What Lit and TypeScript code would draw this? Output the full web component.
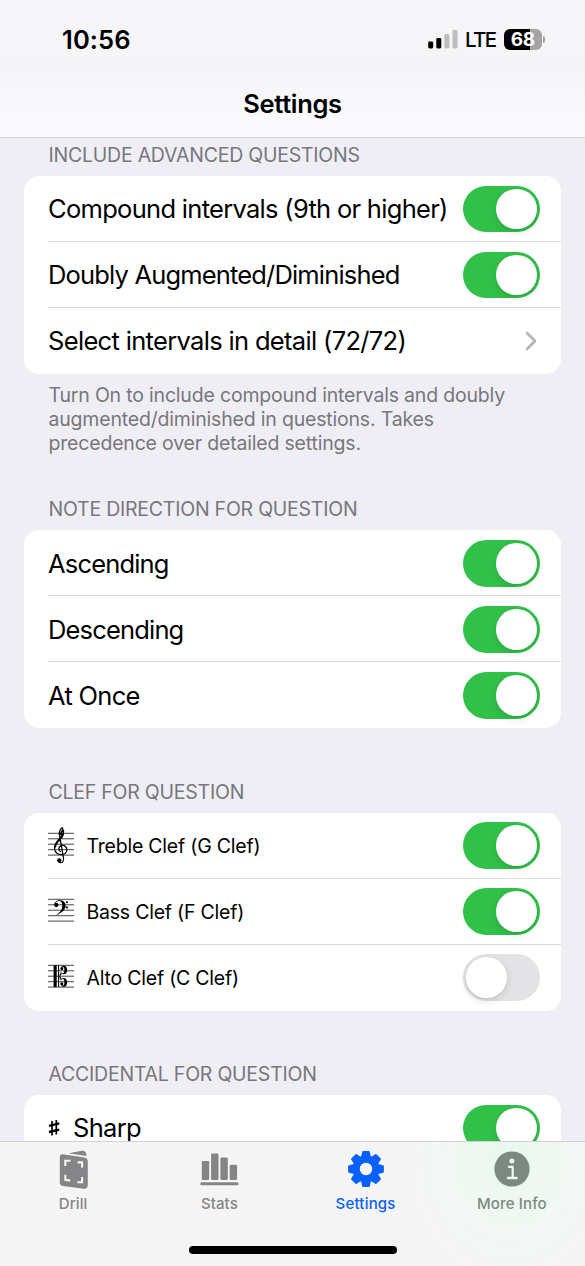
import { LitElement, html, css, svg, nothing } from "lit";
import { customElement, property } from "lit/decorators.js";
import { classMap } from "lit/directives/class-map.js";

@customElement("toggle-switch")
class ToggleSwitch extends LitElement {
  @property({ type: Boolean }) on = false;
  static styles = css`
    :host { display: block; flex: none; }
    .track { box-sizing: border-box; width: 76.5px; height: 46.5px; border-radius: 24px; background: #e3e3e5; padding: 3px; display: flex; }
    .track.on { background: #31c149; justify-content: flex-end; }
    .knob { width: 40.5px; height: 40.5px; border-radius: 50%; background: #fff; box-shadow: 0 3px 8px rgba(0,0,0,.12), 0 1px 2px rgba(0,0,0,.05); }
  `;
  render() {
    return html`<div class=${classMap({ track: true, on: this.on })}><div class="knob"></div></div>`;
  }
}

const staff = svg`<path d="M0 6.3H26M0 11.8H26M0 17.2H26M0 22.7H26M0 28.1H26" stroke="#333" stroke-width=".9" fill="none"/>`;

const glyphs: Record<string, unknown> = {
  treble: svg`${staff}
    <path d="M15.6 31.6 11.4 7.8C10.9 4.4 12 2.3 14.2 .7c1.3 2 1.7 4.3 1.1 6.7-.7 2.7-2.7 4.6-4.7 6.6-2.5 2.5-4.3 4.7-4 8 .3 3.5 3.5 5.9 7.2 5.7 3-.2 5.1-2.4 5-5-.1-2.6-1.9-4.4-4.3-4.3-2.2.1-3.7 1.7-3.6 3.6.1 1.3.8 2.3 2 2.8" fill="none" stroke="#000" stroke-width="1.25"/>
    <path d="M15 3c-1.5 1.3-2.3 3.2-2.2 5.2M15.4 6.5c-.9 2.5-2.7 4.4-4.6 6.4-2.2 2.3-3.7 4.2-3.8 7.5" fill="none" stroke="#000" stroke-width="1.9"/>
    <path d="M15.5 31.2c.4 2.9-1 4.6-3.2 4.6-1.2 0-2-.6-2.3-1.4" fill="none" stroke="#000" stroke-width="1.1"/>
    <circle cx="11.3" cy="33.3" r="2.1"/>`,
  bass: svg`${staff}
    <circle cx="8.3" cy="12" r="2.15"/>
    <path d="M6.3 11.7C6.3 9 8.500 7.2 11.7 7.2c3.7 0 5.9 2.1 5.9 5.3 0 4.7-4.4 7.6-10.6 10.2 4.6-3 7.3-5.7 7.3-10 0-3-1.2-4.6-3.3-4.6-2 0-3.3 1-3.7 2.7z"/>
    <circle cx="18.9" cy="9.3" r="1.05"/><circle cx="18.9" cy="14.4" r="1.05"/>`,
  alto: svg`${staff}
    <path d="M5.6 6.3h3.1v21.8H5.6zM10 6.3h1.1v21.8H10z"/>
    <circle cx="13.8" cy="9.6" r="1.5"/><circle cx="13.8" cy="24.8" r="1.5"/>
    <path d="M12.8 8.5c.7-1.3 1.7-1.8 3-1.8 2.2 0 3.3 1.7 3.3 4 0 2.9-1.3 4.6-3.2 4.6-1 0-1.7-.3-2.2-1-.3 1.4-1 2.3-1.9 2.900.9.6 1.6 1.5 1.9 2.9.5-.7 1.2-1 2.2-1 1.9 0 3.2 1.7 3.2 4.6 0 2.3-1.1 4-3.3 4-1.3 0-2.3-.5-3-1.8l1.9.6c1.3-.1 1.7-.9 1.7-2.9 0-2.3-.4-3.5-1.5-3.5-.9 0-1.5.5-1.9 1.6l-1.9-4.5 1.9-4.5c.4 1.1 1 1.6 1.9 1.6 1.1 0 1.5-1.2 1.5-3.5 0-2-.4-2.8-1.7-2.9z"/>`,
};

interface Row { label: string; on?: boolean; clef?: string; sharp?: boolean; link?: boolean; cls: string; }
interface Section { title: string; cls: string; rows: Row[]; note?: string[]; }

const sections: Section[] = [
  {
    title: "INCLUDE ADVANCED QUESTIONS", cls: "t1",
    rows: [
      { label: "Compound intervals (9th or higher)", on: true, cls: "" },
      { label: "Doubly Augmented/Diminished", on: true, cls: "tight" },
      { label: "Select intervals in detail (72/72)", link: true, cls: "wide" },
    ],
    note: ["Turn On to include compound intervals and doubly", "augmented/diminished in questions. Takes", "precedence over detailed settings."],
  },
  {
    title: "NOTE DIRECTION FOR QUESTION", cls: "t2",
    rows: [
      { label: "Ascending", on: true, cls: "tight" },
      { label: "Descending", on: true, cls: "tight" },
      { label: "At Once", on: true, cls: "" },
    ],
  },
  {
    title: "CLEF FOR QUESTION", cls: "t3",
    rows: [
      { label: "Treble Clef (G Clef)", on: true, clef: "treble", cls: "small" },
      { label: "Bass Clef (F Clef)", on: true, clef: "bass", cls: "small" },
      { label: "Alto Clef (C Clef)", on: false, clef: "alto", cls: "small" },
    ],
  },
  { title: "ACCIDENTAL FOR QUESTION", cls: "t4", rows: [{ label: "Sharp", on: true, sharp: true, cls: "" }] },
];

const gearPath = (() => {
  const pts: string[] = [];
  for (let i = 0; i < 8; i++) {
    const a = (i * Math.PI) / 4;
    for (const [r, d] of [[12.4, -0.31], [16.9, -0.16], [16.9, 0.16], [12.4, 0.31]]) {
      pts.push(`${(20 + r * Math.sin(a + d)).toFixed(2)} ${(20 - r * Math.cos(a + d)).toFixed(2)}`);
    }
  }
  return `M${pts.join("L")}Z`;
})();

const tabs = [
  {
    label: "Drill", cls: "drill",
    icon: svg`<path d="M15.5 4.2 28.5 1.8c2.6-.4 4.3.6 4.7 2.8l.3 2.300z"/>
      <path d="M9.8 5.3 31.3 8.600c2.300.3 3.500 1.600 3.500 3.800V36c0 2.600-1.500 4-4 3.700L9.700 36.900C7.700 36.600 6.800 35.500 6.800 33.500V8.100c0-2.100 1.100-3.100 3-2.800z"/>
      <path d="M17.500 11.700h-5.200v5.200M24.600 13.400h4.500v5.200M12.300 25.800v5l4.900.8M24.400 33.300h4.700v-5.400" fill="none" stroke="#f5f5f6" stroke-width="2.100"/>`,
  },
  {
    label: "Stats", cls: "stats",
    icon: svg`<rect x="2.8" y="12" width="7.4" height="19" rx="1.3"/><rect x="12.1" y="4.5" width="7.4" height="26.5" rx="1.3"/><rect x="21.4" y="8.5" width="7.4" height="22.5" rx="1.3"/><rect x="30.7" y="15.8" width="7.4" height="15.2" rx="1.3"/><rect x="1.2" y="33.3" width="38.4" height="3" rx="1.5"/>`,
  },
  {
    label: "Settings", cls: "active",
    icon: svg`<path d=${gearPath} stroke="currentColor" stroke-width="2.4" stroke-linejoin="round"/><circle cx="20" cy="20" r="6.2" fill="#f5f5f6"/>`,
  },
  {
    label: "More Info", cls: "info",
    icon: svg`<circle cx="20" cy="20" r="17.6"/><circle cx="19.9" cy="11.9" r="2.5" fill="#ecf7ef"/><path d="M16.9 17.8h3.8v11.2M15.9 29h8.8" stroke="#ecf7ef" stroke-width="2.3" stroke-linecap="round" stroke-linejoin="round" fill="none"/>`,
  },
];

@customElement("app-root")
class AppRoot extends LitElement {
  static styles = css`
    :host { display: flex; flex-direction: column; width: 585px; height: 1266px; overflow: hidden; background: #efeef5; color: #000; font-family: Inter, "Liberation Sans", sans-serif; white-space: nowrap; }
    svg { display: block; flex: none; overflow: visible; }
    .top { flex: none; box-sizing: border-box; height: 137.5px; border-bottom: 1.5px solid #d5d4da; background: linear-gradient(#f6f6f8, #f5f5f7 50%, #fafafd 90%); display: flex; flex-direction: column; }
    .status { display: flex; align-items: center; height: 78px; padding: 0 40px 0 62px; font-weight: 600; }
    .time { font-size: 25.5px; letter-spacing: 0.1px; flex: 1; }
    .lte { font-size: 20.5px; font-weight: 500; letter-spacing: -1.7px; margin: 0 8px 0 7px; width: 31px; }
    .battery { width: 37.5px; height: 21px; border-radius: 6px; background: linear-gradient(90deg, #000 68%, #a4a4a6 68%); color: #fff; font-size: 19px; line-height: 21px; font-weight: 700; text-align: center; letter-spacing: -.3px; }
    .nub { width: 2.5px; height: 7px; border-radius: 0 4px 4px 0; background: #a4a4a6; margin-left: 1px; }
    .heading { font-size: 25.5px; line-height: 52px; font-weight: 600; text-align: center; letter-spacing: -0.35px; }
    .scroll { flex: 1; min-height: 0; overflow: hidden; padding: 5.5px 24.5px 0 24px; }
    .section { margin-bottom: 51.5px; }
    .section.t1 { margin-bottom: 42.5px; }
    .title { margin: 0; padding: 0 24.5px 9px; font-size: 19.5px; line-height: 24px; font-weight: 400; letter-spacing: -0.23px; color: #77777c; }
    .card { background: #fff; border-radius: 15px; }
    .row { box-sizing: border-box; height: 66px; display: flex; align-items: center; padding-top: 1.5px; margin-left: 24px; padding-right: 21px; border-bottom: 1px solid #d9d9dc; }
    .t1 .row { padding-top: 0.5px; }
    .row:last-child { border-bottom-color: transparent; }
    .label { flex: 1; font-size: 25.5px; letter-spacing: -0.7px; }
    .tight .label { letter-spacing: -0.83px; }
    .wide .label { letter-spacing: -0.67px; }
    .small .label { font-size: 19.5px; letter-spacing: -0.22px; margin-left: 12.5px; }
    .sharp .label { margin-left: 13px; }
    .t4 .card { height: 90px; }
    .t3 .row { padding-top: 1px; }
    .t4 .row { padding-top: 0.5px; border-bottom-color: transparent; }
    .chev { margin-right: 3px; }
    .note { padding: 8.5px 24.5px 0; font-size: 19.5px; line-height: 24px; color: #77777c; letter-spacing: -0.19px; }
    .tabbar { flex: none; box-sizing: border-box; height: 125.5px; border-top: 1.5px solid #d3d3d7; background: radial-gradient(ellipse 100px 120px at 510px 20px, #e9f8ec, rgba(240,249,242,.7) 55%, transparent), #f5f5f6; display: flex; flex-direction: column; align-items: center; }
    .tabs { display: grid; grid-template-columns: repeat(4, 146.25px); height: 104.5px; }
    .tab { display: flex; flex-direction: column; align-items: center; padding-top: 7.5px; gap: 5px; color: #858587; fill: currentColor; font-size: 15px; line-height: 20px; font-weight: 500; letter-spacing: 0.1px; }
    .tab.active { color: #0a60ff; letter-spacing: 0.2px; }
    .tab.info { color: #7c8980; letter-spacing: 0.15px; }
    .home { width: 208px; height: 8px; border-radius: 4px; background: #000; }
  `;

  renderRow(r: Row) {
    return html`<div class="row ${r.cls} ${r.sharp ? "sharp" : ""}">
      ${r.clef ? html`<svg width="26" height="37" viewBox="0 0 26 37">${glyphs[r.clef]}</svg>` : nothing}
      ${r.sharp ? html`<svg width="12" height="18" viewBox="0 0 12 18"><path d="M4 2v14.4M8.3 1.1v14.4" stroke="#000" stroke-width="1.7"/><path d="M1 6.8 11.300 4.4M1 13 11.300 10.600" stroke="#000" stroke-width="2.400"/></svg>` : nothing}
      <span class="label">${r.label}</span>
      ${r.link
        ? html`<svg class="chev" width="12" height="20" viewBox="0 0 12 20"><path d="M2 2l8 8-8 8" fill="none" stroke="#b4b4b7" stroke-width="2.7" stroke-linecap="round" stroke-linejoin="round"/></svg>`
        : html`<toggle-switch ?on=${r.on}></toggle-switch>`}
    </div>`;
  }

  render() {
    return html`
      <header class="top">
        <div class="status">
          <span class="time">10:56</span>
          <svg width="30" height="20" viewBox="0 0 30 20"><rect x=".2" y="12.5" width="5" height="7" rx="1.4"/><rect x="8.3" y="9" width="5" height="10.5" rx="1.4"/><rect x="16.4" y="5" width="5" height="14.5" rx="1.4" fill="#bdbdbf"/><rect x="24.5" y="1" width="5" height="18.5" rx="1.4" fill="#bdbdbf"/></svg>
          <span class="lte">LTE</span>
          <div class="battery">68</div><div class="nub"></div>
        </div>
        <div class="heading">Settings</div>
      </header>
      <main class="scroll">
        ${sections.map((s) => html`<section class="section ${s.cls}">
          <h2 class="title">${s.title}</h2>
          <div class="card">${s.rows.map((r) => this.renderRow(r))}</div>
          ${s.note ? html`<div class="note">${s.note.map((l) => html`<div>${l}</div>`)}</div>` : nothing}
        </section>`)}
      </main>
      <nav class="tabbar">
        <div class="tabs">
          ${tabs.map((t) => html`<div class="tab ${t.cls}"><svg width="40" height="40" viewBox="0 0 40 40">${t.icon}</svg><span>${t.label}</span></div>`)}
        </div>
        <div class="home"></div>
      </nav>`;
  }
}
